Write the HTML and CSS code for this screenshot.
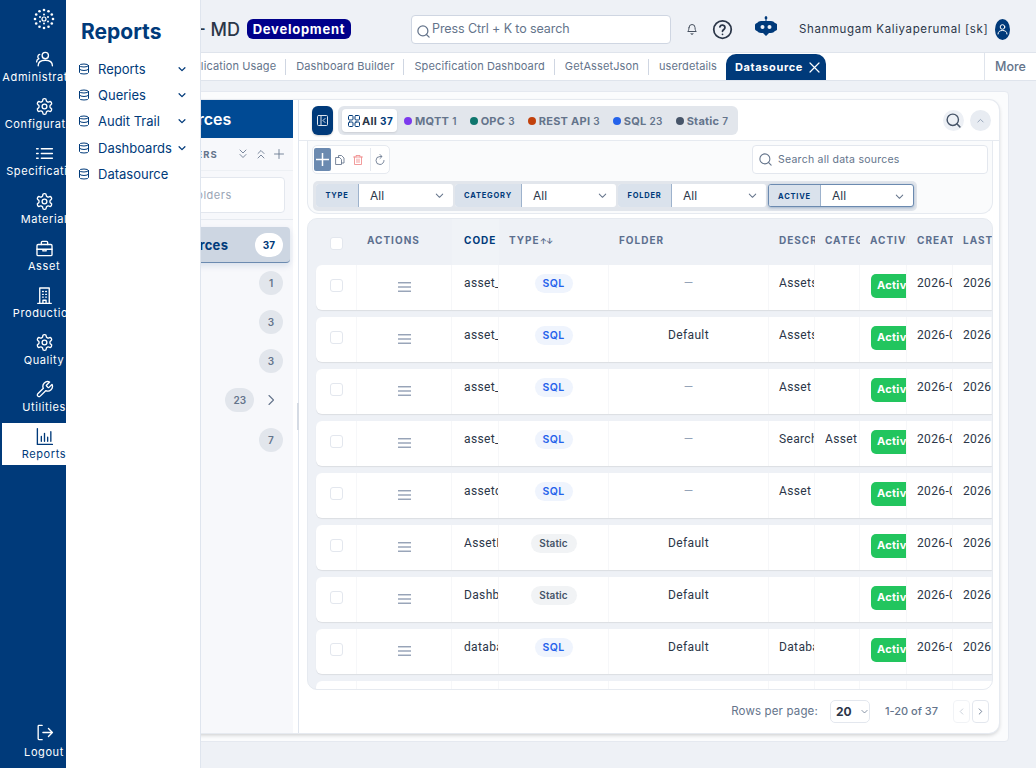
FILE: index.html
```html
<!DOCTYPE html>
<html lang="en">
<head>
    <meta charset="UTF-8">
    <meta name="viewport" content="width=device-width, initial-scale=1.0">
    <title>Datasource</title>
    <link rel="stylesheet" href="styles.css">
</head>
<body>
    <svg class="sprite" width="0" height="0">
        <symbol id="i-gear" viewBox="0 0 24 24"><path d="M12.22 2h-.44a2 2 0 0 0-2 2v.18a2 2 0 0 1-1 1.73l-.43.25a2 2 0 0 1-2 0l-.15-.08a2 2 0 0 0-2.73.73l-.22.38a2 2 0 0 0 .73 2.73l.15.1a2 2 0 0 1 1 1.72v.51a2 2 0 0 1-1 1.74l-.15.09a2 2 0 0 0-.73 2.73l.22.38a2 2 0 0 0 2.73.73l.15-.08a2 2 0 0 1 2 0l.43.25a2 2 0 0 1 1 1.73V20a2 2 0 0 0 2 2h.44a2 2 0 0 0 2-2v-.18a2 2 0 0 1 1-1.73l.43-.25a2 2 0 0 1 2 0l.15.08a2 2 0 0 0 2.73-.73l.22-.39a2 2 0 0 0-.73-2.73l-.15-.08a2 2 0 0 1-1-1.74v-.5a2 2 0 0 1 1-1.74l.15-.09a2 2 0 0 0 .73-2.73l-.22-.38a2 2 0 0 0-2.73-.73l-.15.08a2 2 0 0 1-2 0l-.43-.25a2 2 0 0 1-1-1.73V4a2 2 0 0 0-2-2z"/><circle cx="12" cy="12" r="3"/></symbol>
        <symbol id="i-db" viewBox="0 0 24 24"><ellipse cx="12" cy="5" rx="9" ry="3"/><path d="M3 5v14a9 3 0 0 0 18 0V5"/><path d="M3 12a9 3 0 0 0 18 0"/></symbol>
        <symbol id="i-down" viewBox="0 0 24 24"><path d="M5 9l7 7 7-7"/></symbol>
        <symbol id="i-search" viewBox="0 0 24 24"><circle cx="11" cy="11" r="8"/><path d="M21 21l-4.3-4.3"/></symbol>
        <symbol id="i-menu" viewBox="0 0 14 10"><path d="M0 .5h14M0 5h14M0 9.5h14"/></symbol>
    </svg>

    <nav class="rail">
        <div class="rail-logo">
            <svg width="22" height="22" viewBox="0 0 22 22" class="dots">
                <circle cx="11" cy="2" r="1.3"/><circle cx="15.5" cy="3.2" r="1.3"/><circle cx="18.8" cy="6.5" r="1.3"/><circle cx="20" cy="11" r="1.3"/><circle cx="18.8" cy="15.5" r="1.3"/><circle cx="15.5" cy="18.8" r="1.3"/><circle cx="11" cy="20" r="1.3"/><circle cx="6.5" cy="18.8" r="1.3"/><circle cx="3.2" cy="15.5" r="1.3"/><circle cx="2" cy="11" r="1.3"/><circle cx="3.2" cy="6.5" r="1.3"/><circle cx="6.5" cy="3.2" r="1.3"/>
                <circle cx="11" cy="6.5" r="1"/><circle cx="15" cy="9" r="1"/><circle cx="15" cy="13.5" r="1"/><circle cx="11" cy="15.5" r="1"/><circle cx="7" cy="13.5" r="1"/><circle cx="7" cy="9" r="1"/>
                <circle class="dots-ring" cx="11" cy="11" r="2"/>
            </svg>
        </div>
        <a class="rail-item">
            <svg class="rail-icon" viewBox="0 0 24 24"><circle cx="13" cy="7" r="4"/><path d="M4 20c0-4 3-7 9-7s9 3 9 7"/><path d="M6 5.5a3 3 0 0 0-1 5.5c-2 .8-3 2-3 4"/></svg>
            <span>Administration</span>
        </a>
        <a class="rail-item">
            <svg class="rail-icon"><use href="#i-gear"/></svg>
            <span>Configuration</span>
        </a>
        <a class="rail-item">
            <svg class="rail-icon" viewBox="0 0 24 24"><path d="M8 6h14M8 12h14M8 18h14M2 6h2M2 12h2M2 18h2"/></svg>
            <span>Specification</span>
        </a>
        <a class="rail-item">
            <svg class="rail-icon"><use href="#i-gear"/></svg>
            <span>Material</span>
        </a>
        <a class="rail-item">
            <svg class="rail-icon" viewBox="0 0 24 24"><rect x="2.5" y="7" width="19" height="14" rx="1.5"/><path d="M8 7V4.5A1.5 1.5 0 0 1 9.5 3h5A1.5 1.5 0 0 1 16 4.5V7M2.5 13h19M10 13v2h4v-2"/></svg>
            <span>Asset</span>
        </a>
        <a class="rail-item">
            <svg class="rail-icon" viewBox="0 0 24 24"><path d="M6 22V2.5h12V22M3.5 22h17M10 22v-4h4v4M9.500 7h1M13.500 7h1M9.500 10.500h1M13.500 10.500h1M9.500 14h1M13.500 14h1"/></svg>
            <span>Production</span>
        </a>
        <a class="rail-item">
            <svg class="rail-icon"><use href="#i-gear"/></svg>
            <span>Quality</span>
        </a>
        <a class="rail-item">
            <svg class="rail-icon" viewBox="0 0 24 24"><path d="M14.7 6.3a1 1 0 0 0 0 1.4l1.6 1.6a1 1 0 0 0 1.4 0l3.77-3.77a6 6 0 0 1-7.94 7.94l-6.91 6.91a2.12 2.12 0 0 1-3-3l6.91-6.91a6 6 0 0 1 7.94-7.94l-3.76 3.76z"/></svg>
            <span>Utilities</span>
        </a>
        <a class="rail-item active">
            <svg class="rail-icon" viewBox="0 0 24 24"><path d="M3 2v20h19M8 18v-6M12 18V8M16 18v-5M20 18V6"/></svg>
            <span>Reports</span>
        </a>
        <a class="rail-item logout">
            <svg class="rail-icon" viewBox="0 0 24 24"><path d="M9 3H5a1 1 0 0 0-1 1v16a1 1 0 0 0 1 1h4M10 12h12M17 7l5 5-5 5"/></svg>
            <span>Logout</span>
        </a>
    </nav>

    <aside class="flyout">
        <h2>Reports</h2>
        <ul>
            <li><svg class="db"><use href="#i-db"/></svg>Reports<svg class="caret"><use href="#i-down"/></svg></li>
            <li><svg class="db"><use href="#i-db"/></svg>Queries<svg class="caret"><use href="#i-down"/></svg></li>
            <li><svg class="db"><use href="#i-db"/></svg>Audit Trail<svg class="caret"><use href="#i-down"/></svg></li>
            <li><svg class="db"><use href="#i-db"/></svg>Dashboards<svg class="caret"><use href="#i-down"/></svg></li>
            <li><svg class="db"><use href="#i-db"/></svg>Datasource</li>
        </ul>
    </aside>

    <div class="main">
        <header class="topbar">
            <div class="app-title">MES - MD</div>
            <span class="env-badge">Development</span>
            <div class="global-search">
                <svg width="15" height="15"><use href="#i-search"/></svg>
                <span>Press Ctrl + K to search</span>
            </div>
            <svg class="bell" viewBox="0 0 24 24"><path d="M6 9a6 6 0 0 1 12 0c0 6 2.5 8 2.5 8h-17S6 15 6 9M10 21a2 2 0 0 0 4 0"/></svg>
            <svg class="help" viewBox="0 0 24 24"><circle cx="12" cy="12" r="10"/><path d="M9 9a3 3 0 0 1 5.8 1c0 2-2.8 2.5-2.8 4M12 17.5v.01"/></svg>
            <svg class="bot" width="22" height="22" viewBox="0 0 22 22"><path d="M10.5 0h1v5h-1z"/><circle cx="11" cy="2" r="1.4"/><path d="M6 5h10a5 5 0 0 1 4 2 3 3 0 0 1 2 4 3 3 0 0 1-2 4 5 5 0 0 1-4 2h-2l-3 3-3-3H6a5 5 0 0 1-4-2 3 3 0 0 1-2-4 3 3 0 0 1 2-4 5 5 0 0 1 4-2z"/><circle cx="7.5" cy="11" r="2" fill="#eef1f6"/><circle cx="14.5" cy="11" r="2" fill="#eef1f6"/></svg>
            <span class="user-name">Shanmugam Kaliyaperumal [sk]</span>
            <span class="avatar">
                <svg width="15" height="21" viewBox="0 0 15 21"><circle cx="7.5" cy="8" r="2.3"/><path d="M3 15c0-2.500 2-3.500 4.500-3.500S12 12.500 12 15"/></svg>
            </span>
        </header>

        <div class="tabbar">
            <div class="tabs">
                <span class="tab">Application Usage</span>
                <span class="tab">Dashboard Builder</span>
                <span class="tab">Specification Dashboard</span>
                <span class="tab">GetAssetJson</span>
                <span class="tab">userdetails</span>
                <span class="tab current">Datasource
                    <svg width="11" height="11" viewBox="0 0 11 11"><path d="M1 1l9 9M10 1l-9 9"/></svg>
                </span>
            </div>
            <div class="more">More</div>
        </div>

        <div class="content">
            <div class="outer-card">
                <div class="inner-card">
                    <section class="folders">
                        <div class="folders-head">Data Sources</div>
                        <div class="folders-sub">
                            <span>FOLDERS</span>
                            <svg viewBox="0 0 24 24"><path d="M6 4l6 6 6-6M6 13l6 6 6-6"/></svg>
                            <svg viewBox="0 0 24 24"><path d="M6 11l6-6 6 6M6 20l6-6 6 6"/></svg>
                            <svg viewBox="0 0 24 24"><path d="M12 3v18M3 12h18"/></svg>
                        </div>
                        <div class="folders-search"><div>Search folders</div></div>
                        <ul class="folder-list">
                            <li class="selected"><span>All Data Sources</span><b>37</b></li>
                            <li><span>MQTT</span><b>1</b></li>
                            <li><span>OPC</span><b>3</b></li>
                            <li><span>REST API</span><b>3</b></li>
                            <li><span>SQL</span><b>23</b><svg class="folder-more" viewBox="0 0 24 24"><path d="M8 3l9 9-9 9"/></svg></li>
                            <li><span>Static</span><b>7</b></li>
                        </ul>
                    </section>

                    <div class="splitter"></div>

                    <section class="sources">
                        <div class="sources-top">
                            <button class="panel-toggle">
                                <svg width="11" height="11" viewBox="0 0 11 11"><rect x=".5" y=".5" width="10" height="10" rx="1"/><path d="M4 .5v10M8 3.5L6 5.5l2 2"/></svg>
                            </button>
                            <div class="type-chips">
                                <span class="chip chip-all"><svg width="12" height="12" viewBox="0 0 12 12"><rect x=".5" y=".5" width="4.5" height="4.5" rx="1"/><rect x="7" y=".5" width="4.5" height="4.5" rx="1"/><rect x=".5" y="7" width="4.5" height="4.5" rx="1"/><rect x="7" y="7" width="4.5" height="4.5" rx="1"/></svg>All<em>37</em></span>
                                <span class="chip"><i class="dot purple"></i>MQTT<em>1</em></span>
                                <span class="chip"><i class="dot teal"></i>OPC<em>3</em></span>
                                <span class="chip"><i class="dot orange"></i>REST API<em>3</em></span>
                                <span class="chip"><i class="dot blue"></i>SQL<em>23</em></span>
                                <span class="chip"><i class="dot slate"></i>Static<em>7</em></span>
                            </div>
                            <button class="round-btn search-btn"><svg width="17" height="17"><use href="#i-search"/></svg></button>
                            <button class="round-btn up-btn"><svg width="9" height="9" viewBox="0 0 24 24"><path d="M5 16l7-7 7 7"/></svg></button>
                        </div>

                        <div class="filters">
                            <div class="tools-row">
                                <div class="tools">
                                    <button class="tool-add"><svg width="13" height="13" viewBox="0 0 13 13"><path d="M6.5 0v13M0 6.5h13"/></svg></button>
                                    <svg class="tool-copy" viewBox="0 0 24 24"><path d="M9 7V3h6l5 5v10h-5M4 7h7l4 4v10H4z"/></svg>
                                    <svg class="tool-del" viewBox="0 0 24 24"><path d="M3 6h18M8 6V3h8v3M5 6v15h14V6M10 10v7M14 10v7"/></svg>
                                    <i class="tool-sep"></i>
                                    <svg class="tool-refresh" viewBox="0 0 24 24"><path d="M20 13a8 8 0 1 1-8-8h3M12 1l4 4-4 4"/></svg>
                                </div>
                                <div class="source-search">
                                    <svg width="15" height="15"><use href="#i-search"/></svg>
                                    <span>Search all data sources</span>
                                </div>
                            </div>
                            <div class="filter-bar">
                                <div class="filter f-type"><label>TYPE</label><span>All</span><svg><use href="#i-down"/></svg></div>
                                <div class="filter f-category"><label>CATEGORY</label><span>All</span><svg><use href="#i-down"/></svg></div>
                                <div class="filter f-folder"><label>FOLDER</label><span>All</span><svg><use href="#i-down"/></svg></div>
                                <div class="filter f-active"><label>ACTIVE</label><span>All</span><svg><use href="#i-down"/></svg></div>
                            </div>
                        </div>

                        <div class="table">
                            <div class="row head">
                                <div class="cell"><i class="check"></i></div>
                                <div class="cell">ACTIONS</div>
                                <div class="cell sorted">CODE ↑</div>
                                <div class="cell">TYPE<small>↑↓</small></div>
                                <div class="cell">FOLDER</div>
                                <div class="cell">DESCRIPTION</div>
                                <div class="cell">CATEGORY</div>
                                <div class="cell">ACTIVE</div>
                                <div class="cell">CREATED</div>
                                <div class="cell">LAST UPDATED</div>
                            </div>

                            <div class="row">
                                <div class="cell"><i class="check"></i></div>
                                <div class="cell act"><svg class="burger"><use href="#i-menu"/></svg></div>
                                <div class="cell">asset_master</div>
                                <div class="cell tag"><span class="pill sql">SQL</span></div>
                                <div class="cell mid none">—</div>
                                <div class="cell">Assets list</div>
                                <div class="cell"></div>
                                <div class="cell"><span class="on">Active</span></div>
                                <div class="cell">2026-01-12</div>
                                <div class="cell">2026-01-12</div>
                            </div>
                            <div class="row">
                                <div class="cell"><i class="check"></i></div>
                                <div class="cell act"><svg class="burger"><use href="#i-menu"/></svg></div>
                                <div class="cell">asset_types</div>
                                <div class="cell tag"><span class="pill sql">SQL</span></div>
                                <div class="cell mid">Default</div>
                                <div class="cell">Assets types</div>
                                <div class="cell"></div>
                                <div class="cell"><span class="on">Active</span></div>
                                <div class="cell">2026-01-12</div>
                                <div class="cell">2026-01-12</div>
                            </div>
                            <div class="row">
                                <div class="cell"><i class="check"></i></div>
                                <div class="cell act"><svg class="burger"><use href="#i-menu"/></svg></div>
                                <div class="cell">asset_tree</div>
                                <div class="cell tag"><span class="pill sql">SQL</span></div>
                                <div class="cell mid none">—</div>
                                <div class="cell">Asset</div>
                                <div class="cell"></div>
                                <div class="cell"><span class="on">Active</span></div>
                                <div class="cell">2026-01-12</div>
                                <div class="cell">2026-01-12</div>
                            </div>
                            <div class="row">
                                <div class="cell"><i class="check"></i></div>
                                <div class="cell act"><svg class="burger"><use href="#i-menu"/></svg></div>
                                <div class="cell">asset_search</div>
                                <div class="cell tag"><span class="pill sql">SQL</span></div>
                                <div class="cell mid none">—</div>
                                <div class="cell">Search assets</div>
                                <div class="cell">Asset</div>
                                <div class="cell"><span class="on">Active</span></div>
                                <div class="cell">2026-01-12</div>
                                <div class="cell">2026-01-12</div>
                            </div>
                            <div class="row">
                                <div class="cell"><i class="check"></i></div>
                                <div class="cell act"><svg class="burger"><use href="#i-menu"/></svg></div>
                                <div class="cell">assetclass</div>
                                <div class="cell tag"><span class="pill sql">SQL</span></div>
                                <div class="cell mid none">—</div>
                                <div class="cell">Asset</div>
                                <div class="cell"></div>
                                <div class="cell"><span class="on">Active</span></div>
                                <div class="cell">2026-01-12</div>
                                <div class="cell">2026-01-12</div>
                            </div>
                            <div class="row">
                                <div class="cell"><i class="check"></i></div>
                                <div class="cell act"><svg class="burger"><use href="#i-menu"/></svg></div>
                                <div class="cell">AssetImport</div>
                                <div class="cell tag"><span class="pill static">Static</span></div>
                                <div class="cell mid">Default</div>
                                <div class="cell"></div>
                                <div class="cell"></div>
                                <div class="cell"><span class="on">Active</span></div>
                                <div class="cell">2026-01-12</div>
                                <div class="cell">2026-01-12</div>
                            </div>
                            <div class="row">
                                <div class="cell"><i class="check"></i></div>
                                <div class="cell act"><svg class="burger"><use href="#i-menu"/></svg></div>
                                <div class="cell">Dashboards</div>
                                <div class="cell tag"><span class="pill static">Static</span></div>
                                <div class="cell mid">Default</div>
                                <div class="cell"></div>
                                <div class="cell"></div>
                                <div class="cell"><span class="on">Active</span></div>
                                <div class="cell">2026-01-12</div>
                                <div class="cell">2026-01-12</div>
                            </div>
                            <div class="row">
                                <div class="cell"><i class="check"></i></div>
                                <div class="cell act"><svg class="burger"><use href="#i-menu"/></svg></div>
                                <div class="cell">database_list</div>
                                <div class="cell tag"><span class="pill sql">SQL</span></div>
                                <div class="cell mid">Default</div>
                                <div class="cell">Database list</div>
                                <div class="cell"></div>
                                <div class="cell"><span class="on">Active</span></div>
                                <div class="cell">2026-01-12</div>
                                <div class="cell">2026-01-12</div>
                            </div>
                            <div class="row">
                                <div class="cell"></div><div class="cell"></div><div class="cell"></div><div class="cell"></div><div class="cell"></div>
                                <div class="cell"></div><div class="cell"></div><div class="cell"></div><div class="cell"></div><div class="cell"></div>
                            </div>
                        </div>

                        <div class="pager">
                            <span class="pager-label">Rows per page:</span>
                            <span class="page-size"><b>20</b><svg><use href="#i-down"/></svg></span>
                            <span class="page-range">1-20 of 37</span>
                            <button class="page-btn off"><svg width="7" height="7" viewBox="0 0 8 8"><path d="M5.5 1l-3 3 3 3"/></svg></button>
                            <button class="page-btn"><svg width="7" height="7" viewBox="0 0 8 8"><path d="M2.5 1l3 3-3 3"/></svg></button>
                        </div>
                    </section>
                </div>
            </div>
        </div>
    </div>
</body>
</html>
```

FILE: styles.css
```css
* {
    box-sizing: border-box;
}

html, body {
    height: 100%;
}

body {
    margin: 0;
    display: flex;
    overflow: hidden;
    font-family: Inter, "Liberation Sans", sans-serif;
    background-color: #eef1f6;
    color: #2b3648;
}

ul {
    list-style-type: none;
    margin: 0;
    padding: 0;
}

button {
    border: none;
    padding: 0;
    background: none;
    display: flex;
    align-items: center;
    justify-content: center;
}

svg {
    fill: none;
    stroke: currentColor;
    stroke-linecap: round;
    stroke-linejoin: round;
    flex: none;
}

.sprite {
    position: absolute;
}

/* left rail */
.rail {
    flex: 0 0 88px;
    height: 768px;
    background-color: #003a7a;
    color: white;
    display: flex;
    flex-direction: column;
    padding: 0 2px;
}

.rail-logo {
    height: 45px;
    padding-top: 8px;
    display: flex;
    justify-content: center;
}

.dots {
    stroke: none;
    fill: white;
}

.dots-ring {
    fill: none;
    stroke: white;
    stroke-width: 1.2;
}

.rail-item {
    height: 47.2px;
    padding-top: 5px;
    display: flex;
    flex-direction: column;
    align-items: center;
    font-size: 11px;
    letter-spacing: 0.6px;
    line-height: 15px;
    white-space: nowrap;
}

.rail-icon {
    width: 19px;
    height: 19px;
    margin-bottom: 1px;
    stroke-width: 1.7;
}

.rail-item.active {
    background-color: white;
    color: #003a7a;
    height: 42px;
    padding-top: 4px;
}

.rail-item.logout {
    margin-top: auto;
    height: 45px;
    padding-top: 0;
}

.logout .rail-icon {
    margin-bottom: 3px;
}

/* flyout menu lies over the folders panel */
.flyout {
    position: absolute;
    left: 66px;
    top: 0;
    width: 135px;
    height: 768px;
    background-color: white;
    border-right: 1px solid #dfe5ee;
    color: #003a7a;
    z-index: 5;
}

.flyout h2 {
    margin: 18px 0 11px 15px;
    font-size: 21px;
    line-height: 27px;
    font-weight: 700;
}

.flyout li {
    height: 26.2px;
    padding-left: 12px;
    display: flex;
    align-items: center;
    font-size: 13px;
    position: relative;
}

.db {
    width: 12px;
    height: 12px;
    margin-right: 8px;
    stroke-width: 2;
}

.caret {
    position: absolute;
    left: 111px;
    top: 8px;
    width: 10px;
    height: 10px;
    stroke-width: 3;
}

.main {
    flex: 1;
    min-width: 0;
    display: flex;
    flex-direction: column;
}

/* top header */
.topbar {
    height: 52px;
    padding-top: 6px;
    display: flex;
    align-items: center;
}

.app-title {
    flex: 0 0 152px;
    text-align: right;
    font-size: 18px;
    font-weight: 500;
    white-space: nowrap;
}

.env-badge {
    margin-left: 7px;
    width: 104px;
    height: 20px;
    border-radius: 6px;
    background-color: #00008b;
    color: white;
    font-size: 13px;
    font-weight: 700;
    letter-spacing: 0.75px;
    line-height: 20px;
    text-align: center;
}

.global-search {
    margin-left: 60px;
    width: 260px;
    height: 29px;
    background-color: white;
    border: 1px solid #cfd6e2;
    border-radius: 4px;
    display: flex;
    align-items: center;
    padding-left: 4px;
    color: #64748b;
    font-size: 12.5px;
    letter-spacing: -0.1px;
}

.global-search svg {
    margin-top: 4px;
    margin-right: 1px;
    stroke-width: 2;
}

.global-search span {
    margin-top: -1px;
}

.bell {
    margin-left: 15px;
    width: 12px;
    height: 12px;
    color: #46505e;
    stroke-width: 2;
}

.help {
    margin-left: 14px;
    width: 21px;
    height: 21px;
    color: #2b3648;
    stroke-width: 2;
}

.bot {
    margin-left: 22px;
    margin-top: -4px;
    stroke: none;
    fill: #003a7a;
}

.user-name {
    margin-left: 22px;
    width: 185px;
    font-size: 11.5px;
    letter-spacing: 0.62px;
    white-space: nowrap;
}

.avatar {
    margin-left: 11px;
    width: 15px;
    height: 21px;
    border-radius: 50%;
    background-color: #003a7a;
    color: white;
    display: flex;
}

/* open tabs */
.tabbar {
    height: 29px;
    background-color: white;
    border-top: 1px solid #dfe4ec;
    border-bottom: 1px solid #dfe4ec;
    display: flex;
    align-items: stretch;
}

.tabs {
    display: flex;
    align-items: center;
    flex: 1;
    min-width: 0;
    justify-content: flex-end;
    white-space: nowrap;
    overflow: hidden;
}

.tab {
    font-size: 11px;
    letter-spacing: 0.12px;
    color: #64748b;
    padding: 0 9px 2px 10px;
    border-right: 1px solid #cfd6e2;
    line-height: 14px;
}

.tab.current {
    align-self: flex-end;
    height: 26px;
    margin-right: 158px;
    padding: 0 6px 0 9px;
    border: none;
    border-radius: 10px 10px 0 0;
    background-color: #003a7a;
    color: white;
    font-weight: 700;
    letter-spacing: 0.62px;
    display: flex;
    align-items: center;
    gap: 6px;
}

.tab.current svg {
    stroke-width: 1.2;
}

.tab:nth-last-child(2) {
    border-right: none;
}

.more {
    flex: 0 0 52px;
    background-color: white;
    border-left: 1px solid #dfe4ec;
    color: #64748b;
    font-size: 12.5px;
    font-weight: 500;
    line-height: 27px;
    text-align: center;
}

/* page card */
.content {
    flex: 1;
    padding: 10px 27px 26px 8px;
    min-height: 0;
}

.outer-card {
    height: 100%;
    background-color: #fbfcfd;
    border: 1px solid #e5e9f0;
    border-radius: 4px;
    padding: 8px 9px 8px 7px;
}

.inner-card {
    height: 100%;
    display: flex;
    background-color: white;
    border-radius: 10px;
    box-shadow: 0 0 0 1px #e6eaf0, 0 2px 4px rgba(0, 0, 0, 0.2);
    overflow: hidden;
}

/* folders panel */
.folders {
    flex: 0 0 189px;
    background-color: #f7f8fb;
}

.folders-head {
    height: 38px;
    background-color: #004a94;
    color: white;
    font-size: 16px;
    font-weight: 600;
    line-height: 38px;
    padding-left: 24px;
}

.folders-sub {
    height: 33px;
    display: flex;
    align-items: center;
    justify-content: flex-end;
    padding-right: 8px;
    color: #64748b;
    gap: 6px;
    border-bottom: 1px solid #edf0f4;
}

.folders-sub span {
    font-size: 9.5px;
    font-weight: 700;
    letter-spacing: 1.2px;
    margin-right: 13px;
}

.folders-sub svg {
    width: 12px;
    height: 12px;
    stroke-width: 1.7;
}

.folders-search {
    height: 49px;
    padding: 6px 8px;
    border-bottom: 1px solid #e6eaf0;
}

.folders-search div {
    height: 36px;
    background-color: white;
    border: 1px solid #e3e7ee;
    border-radius: 4px;
    font-size: 11px;
    letter-spacing: 0.5px;
    color: #9aa5b5;
    line-height: 34px;
    padding-left: 36px;
}

.folder-list {
    padding-top: 7px;
}

.folder-list li {
    height: 39.25px;
    display: flex;
    align-items: center;
    padding-right: 10px;
}

.folder-list span {
    margin-right: auto;
    padding-left: 30px;
    font-size: 13px;
}

.folder-list b {
    min-width: 24px;
    height: 24px;
    padding: 0 8px;
    border-radius: 12px;
    background-color: #e2e6ec;
    color: #64748b;
    font-size: 10px;
    font-weight: 600;
    line-height: 24px;
    text-align: center;
}

.folder-list .selected {
    height: 36px;
    margin-right: 3px;
    padding-right: 7px;
    background-color: #cdd6e2;
    border-bottom: 1px solid #6b8ab0;
    border-radius: 4px;
    color: #003a7a;
    box-shadow: 0 3px 6px rgba(0, 58, 122, 0.12);
}

.folder-list .selected span {
    font-weight: 700;
    letter-spacing: 0.3px;
    padding-left: 15px;
}

.folder-list .selected b {
    width: 28px;
    background-color: white;
    color: #003a7a;
    font-weight: 700;
    padding: 0;
}

.folder-more {
    width: 12px;
    height: 12px;
    margin: 0 6px 0 11px;
    color: #64748b;
    stroke-width: 2.2;
}

.splitter {
    flex: 0 0 6px;
    background: linear-gradient(#dfe5ee, #dfe5ee) right top / 1px 100% no-repeat;
    position: relative;
}

.splitter::after {
    content: "";
    position: absolute;
    right: 0;
    top: 303px;
    width: 2px;
    height: 27px;
    background-color: #d5dbe4;
}

/* data source panel */
.sources {
    flex: 1;
    min-width: 0;
    display: flex;
    flex-direction: column;
}

.sources-top {
    flex: 0 0 41px;
    display: flex;
    align-items: flex-start;
    padding: 6px 8px 0 13px;
    border-bottom: 1px solid #e6eaf0;
}

.panel-toggle {
    width: 21px;
    height: 29px;
    background-color: #003a7a;
    color: #dfe5ee;
    border-radius: 6px;
    box-shadow: 0 1px 2px rgba(0, 0, 0, 0.2);
}

.type-chips {
    margin-left: 5px;
    width: 400px;
    height: 29px;
    background-color: #e2e6ec;
    border-radius: 6px;
    display: flex;
    align-items: center;
    padding-left: 4px;
}

.chip {
    display: flex;
    align-items: center;
    font-size: 11px;
    font-weight: 700;
    letter-spacing: 0.25px;
    color: #64748b;
    white-space: nowrap;
    padding: 0 6.5px;
}

.chip em {
    font-style: normal;
    font-size: 10px;
    font-weight: 600;
    margin-left: 3px;
}

.chip-all {
    height: 23px;
    width: 55px;
    padding: 0 6px;
    margin-right: 0.5px;
    background-color: white;
    border-radius: 4px;
    color: #2b3648;
    box-shadow: 0 1px 2px rgba(0, 0, 0, 0.1);
}

.chip-all svg {
    color: #003a7a;
    margin-right: 2px;
}

.chip-all em {
    color: #003a7a;
    font-weight: 700;
    letter-spacing: 0.5px;
}

.dot {
    width: 8px;
    height: 8px;
    border-radius: 50%;
    margin-right: 3px;
}

.purple { background-color: #7c3aed; }
.teal { background-color: #0f766e; }
.orange { background-color: #c2410c; }
.blue { background-color: #2563eb; }
.slate { background-color: #475569; }

.round-btn {
    width: 21px;
    height: 21px;
    border-radius: 50%;
    margin-top: 4px;
    background-color: #e8ecf2;
    color: #64748b;
}

.search-btn {
    margin-left: auto;
    margin-right: 6px;
    background-color: #edf0f5;
    color: #475569;
}

.search-btn svg {
    stroke-width: 2;
}

.up-btn svg {
    stroke-width: 2.5;
    color: #94a3b8;
}

.filters {
    flex: 0 0 73px;
    margin: 0 6px 0 8px;
    padding: 4px 4px 0 5px;
    border: 1px solid #e6eaf0;
    border-top: none;
    border-radius: 0 0 12px 12px;
    background-color: #fafbfc;
}

.tools-row {
    display: flex;
    justify-content: space-between;
}

.tools {
    width: 78px;
    height: 29px;
    margin-left: -1px;
    background-color: white;
    border: 1px solid #e6eaf0;
    border-radius: 5px;
    display: flex;
    align-items: center;
    padding: 2px 1px;
}

.tool-add {
    width: 17px;
    height: 23px;
    background-color: #6b8ab0;
    color: white;
    border-radius: 2px;
}

.tool-add svg {
    stroke-width: 1.5;
}

.tools > svg {
    width: 12px;
    height: 12px;
    stroke-width: 1.7;
}

.tool-copy {
    margin-left: 3px;
    color: #64748b;
}

.tool-del {
    margin-left: 6px;
    color: #f08a8a;
}

.tool-sep {
    width: 1px;
    height: 23px;
    margin-left: 6px;
    background-color: #e6eaf0;
}

.tool-refresh {
    margin-left: 3px;
    color: #64748b;
}

.source-search {
    width: 236px;
    height: 29px;
    background-color: white;
    border: 1px solid #e3e7ee;
    border-radius: 4px;
    display: flex;
    align-items: center;
    gap: 5px;
    padding-left: 5px;
    font-size: 10.5px;
    letter-spacing: 0.25px;
    color: #64748b;
}

.source-search svg {
    stroke-width: 1.7;
}

.filter-bar {
    margin-top: 7px;
    width: 604px;
    height: 30px;
    padding: 3px;
    background-color: #e2e6ec;
    border-radius: 5px;
    display: flex;
    gap: 2px;
}

.filter {
    height: 23px;
    background-color: white;
    border-radius: 3px;
    display: flex;
    align-items: center;
    font-size: 12px;
    position: relative;
    overflow: hidden;
}

.filter label {
    height: 100%;
    background-color: #dae2ec;
    border-right: 1px solid #9db2cc;
    color: #003a7a;
    font-size: 7.5px;
    font-weight: 700;
    letter-spacing: 0.8px;
    line-height: 23px;
    text-align: center;
    margin-right: 11px;
}

.filter svg {
    position: absolute;
    right: 8px;
    top: 6px;
    width: 11px;
    height: 11px;
    color: #64748b;
    stroke-width: 2.2;
}

.f-type { width: 137px; }
.f-type label { width: 43px; }
.f-category { width: 161px; }
.f-category label { width: 67px; }
.f-folder { width: 148px; }
.f-folder label { width: 54px; }
.f-active { width: 146px; border: 1px solid #6b8ab0; box-shadow: 0 1px 3px rgba(0, 58, 122, 0.3); }
.f-active label { width: 52px; }

/* table */
.table {
    margin: 4px 6px 0 8px;
    height: 472px;
    overflow: hidden;
    background-color: #eef1f6;
    border: 1px solid #e6eaf0;
    border-radius: 10px;
    padding-left: 8px;
}

.row {
    display: grid;
    grid-template-columns: 41px 95px 47px 110px 160px 46px 45px 47px 46px 1fr;
    height: 45px;
    margin-bottom: 7px;
    background-color: white;
    border-radius: 6px 0 0 6px;
    box-shadow: 0 1px 1px rgba(0, 0, 0, 0.08);
    font-family: Roboto, Inter, sans-serif;
    font-size: 12px;
    letter-spacing: 0.35px;
}

.cell {
    padding: 8.5px 0 0 10px;
    line-height: 18px;
    white-space: nowrap;
    overflow: hidden;
    border-right: 1px solid #f6f7f9;
}

.cell:nth-child(3) {
    padding-left: 12px;
}

.cell:nth-child(8) {
    padding-left: 11px;
}

.row.head {
    height: 46px;
    margin-bottom: 0;
    background-color: transparent;
    box-shadow: none;
    color: #5c6f8f;
    font-family: Inter, sans-serif;
    font-size: 10px;
    font-weight: 700;
    letter-spacing: 1px;
}

.head .cell {
    padding-top: 12px;
    border-right: none;
}

.head .cell:nth-child(8) {
    padding-left: 10px;
}

.head .sorted {
    color: #003a7a;
    background-color: #f0f3f7;
}

.head small {
    font-size: 8px;
    letter-spacing: -1px;
}

.cell:first-child {
    padding: 8px 0 0 11px;
}

.head .cell:first-child {
    padding-top: 12px;
}

.check {
    display: block;
    width: 13px;
    height: 13px;
    margin: 6px 0 0 3px;
    background-color: white;
    border: 1px solid #e3e7ee;
    border-radius: 3px;
}

.act {
    padding: 17px 0 0 41px;
}

.burger {
    display: block;
    width: 13px;
    height: 10px;
    color: #5c6f8f;
    stroke-width: 1;
}

.tag {
    text-align: center;
    padding: 8.5px 0 0;
}

.pill {
    display: inline-block;
    height: 19px;
    padding: 0 10px;
    border-radius: 10px;
    font-family: Inter, sans-serif;
    font-size: 10.5px;
    font-weight: 600;
    line-height: 19px;
}

.sql {
    width: 38px;
    padding: 0;
    background-color: #eff4fd;
    color: #2563eb;
}

.static {
    width: 46px;
    padding: 0;
    background-color: #f1f3f5;
    color: #475569;
    font-size: 10px;
    letter-spacing: 0.1px;
}

.mid {
    text-align: center;
    padding-left: 0;
}

.none {
    color: #94a3b8;
}

.on {
    display: block;
    width: 60px;
    height: 24px;
    background-color: #22c55e;
    color: white;
    border-radius: 5px;
    font-family: Inter, sans-serif;
    font-size: 11px;
    font-weight: 700;
    letter-spacing: 0.3px;
    line-height: 23px;
    padding-left: 6px;
}

/* pager */
.pager {
    flex: 1;
    display: flex;
    align-items: center;
    justify-content: flex-end;
    padding: 0 10px 1px 0;
    color: #64748b;
    font-size: 11.5px;
}

.pager-label {
    letter-spacing: 0.15px;
}

.page-size {
    margin-left: 12px;
    width: 40px;
    height: 23px;
    border: 1px solid #e3e7ee;
    border-radius: 5px;
    display: flex;
    align-items: center;
    padding-left: 5px;
    color: #2b3648;
    font-size: 12px;
}

.page-size svg {
    width: 9px;
    height: 9px;
    margin-left: 8px;
    color: #64748b;
    stroke-width: 2;
}

.page-range {
    margin-left: 15px;
    font-size: 11px;
    font-weight: 500;
}

.page-btn {
    width: 17px;
    height: 23px;
    margin-left: 2px;
    background-color: white;
    border: 1px solid #e3e7ee;
    border-radius: 4px;
    color: #64748b;
}

.page-btn.off {
    margin-left: 15px;
    border-color: #f1f3f6;
    color: #c5ccd6;
}
```
